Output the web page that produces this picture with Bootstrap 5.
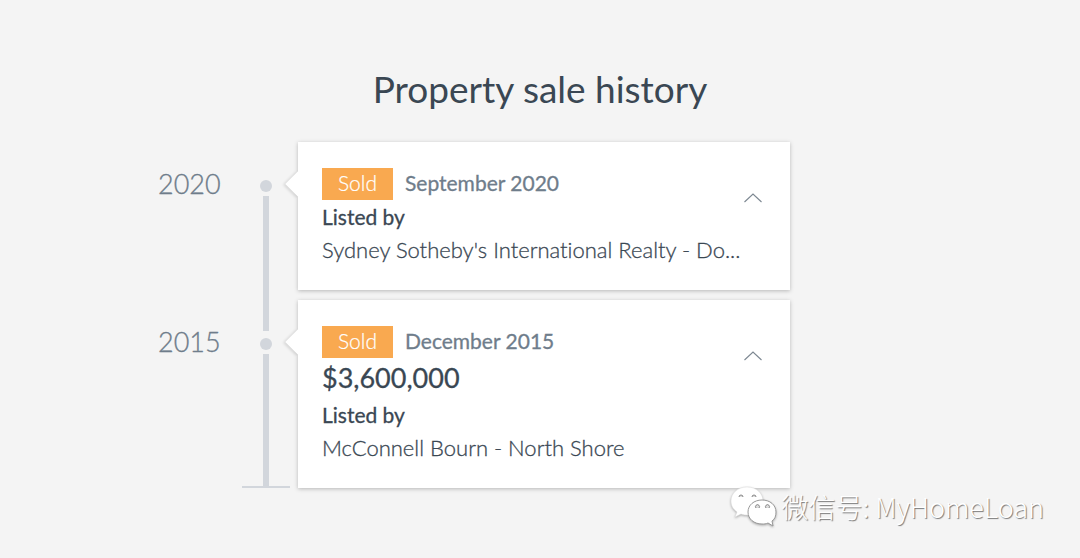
<!DOCTYPE html>
<html lang="en">
<head>
<meta charset="utf-8">
<meta name="viewport" content="width=device-width, initial-scale=1">
<title>Property sale history</title>
<link href="https://cdn.jsdelivr.net/npm/bootstrap@5.3.0/dist/css/bootstrap.min.css" rel="stylesheet">
<style>
  :root { --ink: #3a4753; --slate: #6f7d8b; --rail: #d2d6dc; }
  body { background: #f4f4f4; color: var(--ink); font-family: Lato, "Noto Sans CJK SC", sans-serif; font-size: 21px; line-height: 33px; font-variant-ligatures: none; }
  .history { max-width: 764px; padding-top: 66px; padding-bottom: 70px; }
  .history h1 { font-size: 37px; line-height: 46px; font-weight: 400; margin-bottom: 30px; }
  .timeline { margin-right: 132px; }
  .year { width: 84px; padding-top: 25px; font-size: 27px; font-weight: 300; color: var(--slate); -webkit-text-stroke: .3px; }
  .rail { width: 48px; margin-right: 8px; }
  .stub, .line { width: 6px; background: var(--rail); }
  .stub { height: 31px; }
  .first .stub { background: none; }
  .dot { width: 12px; height: 12px; margin: 7px 0 4px; border-radius: 50%; background: var(--rail); }
  .base { height: 2px; background: var(--rail); }
  .sale { padding: 26px 24px 24px; background: #fff; box-shadow: 0 1px 4px rgba(0,0,0,.25); }
  .sale::before { content: ""; position: absolute; left: -9px; top: 33px; width: 18px; height: 18px; background: #fff; transform: rotate(45deg); box-shadow: -1px 2px 3px rgba(0,0,0,.12); clip-path: polygon(-5px -5px, 18px 18px, 18px 23px, -5px 23px); }
  .first .sale { margin-bottom: 10px; }
  .sold { width: 71px; height: 32px; line-height: 30px; background: #f9a950; color: #fff; font-weight: 300; -webkit-text-stroke: .2px; }
  .when { line-height: 30px; color: var(--slate); }
  .semi { -webkit-text-stroke: .3px; }
  .by { line-height: 34px; }
  .agency { font-size: 22px; line-height: 32px; font-weight: 300; -webkit-text-stroke: .3px; }
  .price { font-size: 27px; line-height: 40px; }
  .toggle { top: 41px; right: 18px; width: 38px; height: 30px; line-height: 0; color: #7c8791; }
  .watermark { right: 36px; bottom: 30px; z-index: 2; font-family: "Noto Sans CJK SC", sans-serif; font-size: 27px; font-weight: 300; line-height: 40px; color: #fff; text-shadow: 1px 1px 1px #777; }
  .watermark svg { filter: drop-shadow(0 1px 1px #aaa); }
</style>
</head>
<body>
<main class="position-relative min-vh-100">
  <div class="history container px-0">
    <h1 class="text-center">Property sale history</h1>
    <div class="timeline">
      <section class="first d-flex">
        <div class="year">2020</div>
        <div class="rail d-flex flex-column align-items-center"><div class="stub"></div><div class="dot"></div><div class="line flex-grow-1"></div></div>
        <article class="sale position-relative flex-grow-1">
          <div class="d-flex gap-2"><span class="sold text-center">Sold</span><span class="when semi ms-1">September 2020</span></div>
          <div class="by semi">Listed by</div>
          <div class="agency text-nowrap">Sydney Sotheby's International Realty - Do...</div>
          <button type="button" class="toggle btn p-0 border-0 position-absolute" aria-label="Collapse September 2020 sale"><svg width="18" height="10" viewBox="0 0 18 10" fill="none" stroke="currentColor" stroke-width="1.1"><path d="M.5 9 9 1l8.500 8"/></svg></button>
        </article>
      </section>
      <section class="d-flex">
        <div class="year">2015</div>
        <div class="rail d-flex flex-column align-items-center"><div class="stub"></div><div class="dot"></div><div class="line flex-grow-1"></div><div class="base w-100"></div></div>
        <article class="sale position-relative flex-grow-1">
          <div class="d-flex gap-2"><span class="sold text-center">Sold</span><span class="when semi ms-1">December 2015</span></div>
          <div class="price semi">$3,600,000</div>
          <div class="by semi">Listed by</div>
          <div class="agency">McConnell Bourn - North Shore</div>
          <button type="button" class="toggle btn p-0 border-0 position-absolute" aria-label="Collapse December 2015 sale"><svg width="18" height="10" viewBox="0 0 18 10" fill="none" stroke="currentColor" stroke-width="1.1"><path d="M.5 9 9 1l8.500 8"/></svg></button>
        </article>
      </section>
    </div>
  </div>
  <div class="watermark position-absolute d-flex align-items-center text-nowrap">
    <svg class="me-1" width="48" height="42" viewBox="0 0 48 42" fill="#fff" aria-hidden="true">
      <path d="M17 1C8 1 1 7 1 15c0 5 2 8 6 11l-2 5 6-3c2 1 5 1 8 1 8-1 14-6 14-14C33 7 26 1 17 1Z" stroke="#ddd" stroke-width=".5"/>
      <path d="M32 14c-8 0-14 5-14 12s6 12 14 12c2 0 4 0 6-1l5 3-1-5c3-2 4-5 4-9 0-7-6-12-14-12Z" stroke="#999"/>
      <g fill="#ddd" stroke="#888"><path d="M9 11a2 2 0 1 1 4 0M22 11a2 2 0 1 1 4 0M26 22a2 2 0 1 1 3 0M36 22a2 2 0 1 1 3 0"/></g>
    </svg>
    <span>微信号: MyHomeLoan</span>
  </div>
</main>
<script src="https://cdn.jsdelivr.net/npm/bootstrap@5.3.0/dist/js/bootstrap.bundle.min.js"></script>
</body>
</html>
